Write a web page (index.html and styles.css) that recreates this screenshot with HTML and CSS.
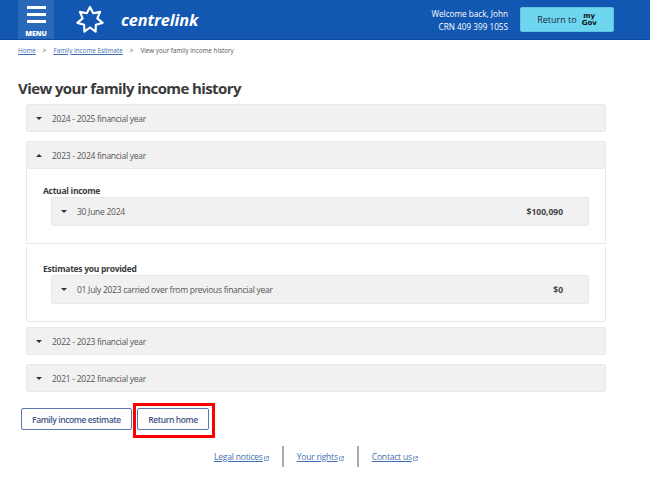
FILE: index.html
```html
<!DOCTYPE html>
<html lang="en">
<head>
<meta charset="utf-8">
<title>View your family income history</title>
<link rel="stylesheet" href="styles.css">
</head>
<body>
<header class="topbar">
  <div class="brand">
    <button class="menu" type="button">
      <span class="bars"><i></i><i></i><i></i></span>
      <span class="menu-label">MENU</span>
    </button>
    <svg class="star" viewBox="0 0 30 30" width="30" height="30" aria-hidden="true">
      <path d="M15 2 L18.25 8.24 L25.16 6.89 L22.31 13.33 L27.67 17.89 L20.86 19.68 L20.64 26.71 L15 22.5 L9.36 26.71 L9.14 19.68 L2.33 17.89 L7.69 13.33 L4.84 6.89 L11.75 8.24 Z" fill="none" stroke="#fff" stroke-width="2.1" stroke-linejoin="round"/>
    </svg>
    <span class="wordmark">centrelink</span>
  </div>
  <div class="account">
    <div class="welcome">
      <div>Welcome back, John</div>
      <div>CRN 409 399 105S</div>
    </div>
    <a class="mygov" href="#">
      <span>Return to</span>
      <span class="mygov-logo">my<br>Gov</span>
    </a>
  </div>
</header>

<nav class="crumbs">
  <a href="#">Home</a><span class="sep">&gt;</span><a href="#">Family Income Estimate</a><span class="sep">&gt;</span><span>View your family income history</span>
</nav>

<main class="content">
  <h1>View your family income history</h1>
  <div class="stack">
    <div class="acc-head"><span class="tri down"></span>2024 - 2025 financial year</div>

    <section class="open-year">
      <div class="acc-head flat"><span class="tri up"></span>2023 - 2024 financial year</div>
      <div class="card first">
        <h2>Actual income</h2>
        <div class="row"><span class="tri down"></span><span class="row-label">30 June 2024</span><b>$100,090</b></div>
      </div>
      <div class="card second">
        <h2>Estimates you provided</h2>
        <div class="row"><span class="tri down"></span><span class="row-label">01 July 2023 carried over from previous financial year</span><b>$0</b></div>
      </div>
    </section>

    <div class="acc-head"><span class="tri down"></span>2022 - 2023 financial year</div>
    <div class="acc-head last"><span class="tri down"></span>2021 - 2022 financial year</div>
  </div>

  <div class="actions">
    <a class="btn" href="#">Family income estimate</a>
    <a class="btn marked" href="#">Return home</a>
  </div>
</main>

<footer class="foot">
  <a href="#">Legal notices<svg class="ext" viewBox="0 0 6 6" width="5" height="5"><path d="M2.5 1H.5v4.5H5V3.5M3 .5h2.5V3M5.3.7 2.4 3.6" fill="none" stroke="currentColor" stroke-width=".8"/></svg></a>
  <a href="#">Your rights<svg class="ext" viewBox="0 0 6 6" width="5" height="5"><path d="M2.5 1H.5v4.5H5V3.5M3 .5h2.5V3M5.3.7 2.4 3.6" fill="none" stroke="currentColor" stroke-width=".8"/></svg></a>
  <a href="#">Contact us<svg class="ext" viewBox="0 0 6 6" width="5" height="5"><path d="M2.5 1H.5v4.5H5V3.5M3 .5h2.5V3M5.3.7 2.4 3.6" fill="none" stroke="currentColor" stroke-width=".8"/></svg></a>
</footer>
</body>
</html>
```

FILE: styles.css
```css
* { box-sizing: border-box; }
html, body { margin: 0; padding: 0; }
body {
  width: 650px;
  height: 488px;
  overflow: hidden;
  background: #fff;
  color: #3a3a3a;
  font-family: "Open Sans", "Liberation Sans", sans-serif;
}
a { color: #3f6fb0; }

.topbar {
  height: 40px;
  background: #1257b1;
  border-bottom: 1px solid #0c4a9c;
  display: flex;
  justify-content: space-between;
  align-items: stretch;
  padding: 0 36px 0 18px;
}
.brand { display: flex; align-items: center; }
.menu {
  width: 36px;
  height: 39px;
  padding: 6px 0 0;
  border: 0;
  background: #2a69ba;
  color: #fff;
  display: flex;
  flex-direction: column;
  align-items: center;
  font-family: inherit;
}
.bars { display: flex; flex-direction: column; gap: 4px; }
.bars i { display: block; width: 19px; height: 3px; background: #fff; }
.menu-label { font-size: 7px; font-weight: 800; line-height: 9px; margin-top: 6px; }
.star { margin-left: 21px; }
.wordmark {
  margin-left: 16px;
  color: #fff;
  font-size: 16.3px;
  font-weight: 700;
  font-style: italic;
  letter-spacing: -.1px;
}
.account { display: flex; align-items: center; gap: 12px; }
.welcome {
  text-align: right;
  color: #fff;
  font-size: 8.2px;
  line-height: 13px;
}
.mygov {
  width: 94px;
  height: 25px;
  background: #6fd6f0;
  border: 1px solid #5cc4e4;
  border-radius: 2px;
  color: #1d2b36;
  font-size: 9px;
  text-decoration: none;
  display: flex;
  align-items: center;
  justify-content: center;
  gap: 5px;
}
.mygov-logo {
  font-family: "DejaVu Sans", sans-serif;
  font-size: 7px;
  font-weight: 700;
  line-height: 7px;
  color: #111;
  text-align: center;
}

.crumbs {
  padding: 5px 18px 0;
  height: 24px;
  font-size: 6.3px;
  line-height: 11px;
  color: #555;
}
.crumbs a { color: #3f6fb0; }
.sep { margin: 0 7px; }

.content { padding: 0 44px 0 18px; }
h1 {
  margin: 0;
  padding-top: 13px;
  height: 40px;
  font-size: 15px;
  line-height: 22px;
  font-weight: 700;
  letter-spacing: -.6px;
  color: #3a3a3a;
}
.stack { margin-left: 8px; display: flex; flex-direction: column; gap: 8px; }
.acc-head {
  height: 28px;
  padding-left: 9px;
  display: flex;
  align-items: center;
  background: #f1f1f1;
  border: 1px solid #e8e8e8;
  border-radius: 2px;
  font-size: 8.5px;
  letter-spacing: -.27px;
  color: #555;
}
.acc-head.flat { border-radius: 2px 2px 0 0; }
.acc-head.last { margin-top: 1px; }
.tri { width: 0; height: 0; margin-right: 10px; border-left: 3px solid transparent; border-right: 3px solid transparent; }
.tri.down { border-top: 3px solid #333; }
.tri.up { border-bottom: 3px solid #333; }

.open-year { display: flex; flex-direction: column; margin: 1px 0 -3px; }
.card {
  border: 1px solid #e8e8e8;
  border-top: 0;
  padding: 0 16px 0 16px;
}
.card.first { height: 75px; border-radius: 0 0 2px 2px; padding-top: 16px; }
.card.second { height: 75px; margin-top: 3px; padding-top: 16px; border-radius: 0 0 2px 2px; }
h2 {
  margin: 0;
  font-size: 8.5px;
  letter-spacing: -.27px;
  line-height: 12px;
  font-weight: 700;
  color: #3a3a3a;
}
.row {
  height: 29px;
  margin: 0 0 0 8px;
  padding: 0 25px 0 9px;
  display: flex;
  align-items: center;
  background: #f1f1f1;
  border: 1px solid #e8e8e8;
  border-radius: 2px;
  font-size: 8.5px;
  letter-spacing: -.27px;
  color: #555;
}
.row-label { flex: 1; }
.row b { color: #444; font-weight: 700; letter-spacing: 0; }

.actions { display: flex; gap: 5px; margin: 16px 0 0 3px; }
.btn {
  height: 22px;
  padding: 0 10px;
  display: flex;
  align-items: center;
  border: 1px solid #5a78ad;
  border-radius: 2px;
  font-size: 8.5px;
  letter-spacing: -.4px;
  font-weight: 600;
  color: #3f5585;
  text-decoration: none;
  position: relative;
}
.btn.marked { padding: 0 10.5px; }
.btn.marked::after {
  content: "";
  box-sizing: border-box;
  position: absolute;
  left: -5px;
  top: -6px;
  width: 82px;
  height: 35px;
  border: 3px solid #f00;
}

.foot {
  position: absolute;
  top: 446px;
  left: 214px;
  display: flex;
  height: 21px;
  align-items: center;
  font-size: 8.5px;
  letter-spacing: -.2px;
}
.foot a {
  color: #3f6fb0;
  padding-right: 13px;
  margin-right: 13px;
  line-height: 21px;
  border-right: 2px solid #aaa;
}
.foot a:last-child { border-right: 0; }
.ext { margin-left: 1px; vertical-align: -1px; }
```
